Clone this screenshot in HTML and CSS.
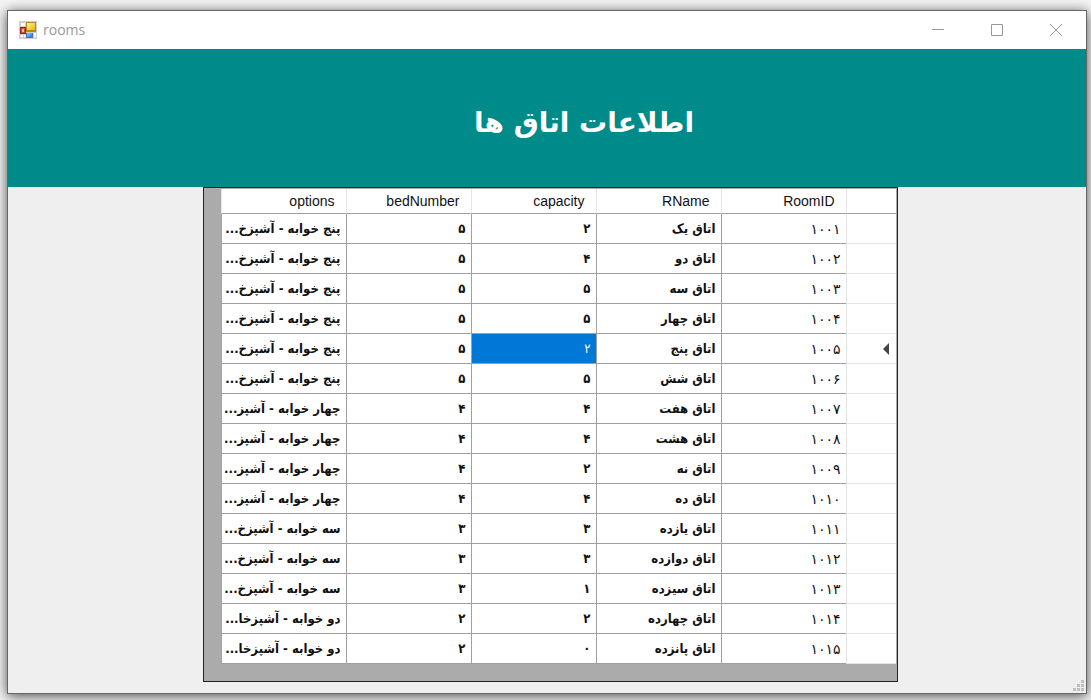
FILE: index.html
```html
<!DOCTYPE html>
<html lang="fa">
<head>
<meta charset="utf-8">
<title>rooms</title>
<link rel="stylesheet" href="styles.css">
</head>
<body>
<main class="window">
  <header class="titlebar">
    <svg class="app-icon" width="18" height="18" viewBox="0 0 18 18" aria-hidden="true">
      <defs>
        <linearGradient id="gold" x1="0" y1="0" x2="1" y2="1"><stop offset="0" stop-color="#fff3a0"/><stop offset="1" stop-color="#f0b400"/></linearGradient>
        <linearGradient id="blue" x1="0" y1="0" x2="1" y2="1"><stop offset="0" stop-color="#9cc4ff"/><stop offset="1" stop-color="#3a6fd8"/></linearGradient>
      </defs>
      <rect width="18" height="18" fill="#d0d0d0"/>
      <path d="M2 2h4v3H2zM2 14h2v2H2zM5 14h2v2H5zM15 12h2v4h-2z" fill="#fff"/>
      <rect x="1" y="6" width="6" height="7" fill="#a52020"/>
      <rect x="2" y="7" width="4" height="5" fill="#c84a40"/>
      <rect x="3" y="8" width="2" height="3" fill="#f4b8a8"/>
      <rect x="7" y="1" width="10" height="10" fill="#b98a10"/>
      <rect x="8" y="2" width="8" height="7" fill="url(#gold)"/>
      <rect x="7" y="12" width="7" height="5" fill="#3f6fd0"/>
      <rect x="8" y="12" width="5" height="4" fill="url(#blue)"/>
    </svg>
    <span class="caption">rooms</span>
    <div class="controls">
      <button type="button" class="control" aria-label="Minimize"><svg width="12" height="12" viewBox="0 0 12 12"><path d="M0 5.500h12"/></svg></button>
      <button type="button" class="control" aria-label="Maximize"><svg width="12" height="12" viewBox="0 0 12 12"><path d="M.5.5h11v11H.5z"/></svg></button>
      <button type="button" class="control" aria-label="Close"><svg width="12" height="12" viewBox="0 0 12 12"><path d="M0 0l12 12M12 0L0 12"/></svg></button>
    </div>
  </header>
  <div class="banner"><h1 class="heading" dir="rtl">اطلاعات اتاق ها</h1></div>
  <section class="content">
    <div class="grid">
      <table class="rooms" dir="rtl">
        <thead><tr><th class="marker"></th><th>RoomID</th><th>RName</th><th>capacity</th><th>bedNumber</th><th>options</th></tr></thead>
        <tbody>
          <tr><td class="marker"></td><td class="id">۱۰۰۱</td><td>اتاق یک</td><td>۲</td><td>۵</td><td>پنج خوابه - آشپزخ...</td></tr>
          <tr><td class="marker"></td><td class="id">۱۰۰۲</td><td>اتاق دو</td><td>۴</td><td>۵</td><td>پنج خوابه - آشپزخ...</td></tr>
          <tr><td class="marker"></td><td class="id">۱۰۰۳</td><td>اتاق سه</td><td>۵</td><td>۵</td><td>پنج خوابه - آشپزخ...</td></tr>
          <tr><td class="marker"></td><td class="id">۱۰۰۴</td><td>اتاق چهار</td><td>۵</td><td>۵</td><td>پنج خوابه - آشپزخ...</td></tr>
          <tr><td class="marker"><svg class="arrow" width="6" height="12" viewBox="0 0 6 12"><path d="M6 0v12L0 6z"/></svg></td><td class="id">۱۰۰۵</td><td>اتاق پنج</td><td class="selected">۲</td><td>۵</td><td>پنج خوابه - آشپزخ...</td></tr>
          <tr><td class="marker"></td><td class="id">۱۰۰۶</td><td>اتاق شش</td><td>۵</td><td>۵</td><td>پنج خوابه - آشپزخ...</td></tr>
          <tr><td class="marker"></td><td class="id">۱۰۰۷</td><td>اتاق هفت</td><td>۴</td><td>۴</td><td>چهار خوابه - آشپز...</td></tr>
          <tr><td class="marker"></td><td class="id">۱۰۰۸</td><td>اتاق هشت</td><td>۴</td><td>۴</td><td>چهار خوابه - آشپز...</td></tr>
          <tr><td class="marker"></td><td class="id">۱۰۰۹</td><td>اتاق نه</td><td>۲</td><td>۴</td><td>چهار خوابه - آشپز...</td></tr>
          <tr><td class="marker"></td><td class="id">۱۰۱۰</td><td>اتاق ده</td><td>۴</td><td>۴</td><td>چهار خوابه - آشپز...</td></tr>
          <tr><td class="marker"></td><td class="id">۱۰۱۱</td><td>اتاق یازده</td><td>۳</td><td>۳</td><td>سه خوابه - آشپزخ...</td></tr>
          <tr><td class="marker"></td><td class="id">۱۰۱۲</td><td>اتاق دوازده</td><td>۳</td><td>۳</td><td>سه خوابه - آشپزخ...</td></tr>
          <tr><td class="marker"></td><td class="id">۱۰۱۳</td><td>اتاق سیزده</td><td>۱</td><td>۳</td><td>سه خوابه - آشپزخ...</td></tr>
          <tr><td class="marker"></td><td class="id">۱۰۱۴</td><td>اتاق چهارده</td><td>۲</td><td>۲</td><td>دو خوابه - آشپزخا...</td></tr>
          <tr><td class="marker"></td><td class="id">۱۰۱۵</td><td>اتاق پانزده</td><td>۰</td><td>۲</td><td>دو خوابه - آشپزخا...</td></tr>
        </tbody>
      </table>
    </div>
  </section>
  <svg class="grip" width="11" height="11" viewBox="0 0 11 11" aria-hidden="true"><path d="M8 0h3v3H8zM4 4h3v3H4zM8 4h3v3H8zM0 8h3v3H0zM4 8h3v3H4zM8 8h3v3H8z"/></svg>
</main>
</body>
</html>
```
FILE: styles.css
```css
* { box-sizing: border-box; }

body {
  margin: 0;
  padding: 10px 4px 6px 7px;
  min-height: 100vh;
  display: flex;
  background: #f4f4f4;
  overflow: hidden;
  font-family: "Liberation Sans", "DejaVu Sans", sans-serif;
}

.window {
  position: relative;
  flex: 1;
  display: flex;
  flex-direction: column;
  border: 1px solid #666;
  background: #efefef;
  box-shadow: 0 2px 12px rgba(0, 0, 0, 0.7);
}

.titlebar {
  display: flex;
  align-items: center;
  height: 38px;
  padding: 0 1px 0 11px;
  gap: 6px;
  background: #fff;
}

.caption {
  color: #999;
  font: 14px/20px "Open Sans", sans-serif;
}

.controls {
  display: flex;
  align-self: stretch;
  margin-left: auto;
}

.control {
  width: 59px;
  padding: 0;
  border: 0;
  background: none;
  display: flex;
  align-items: center;
  justify-content: center;
}

.control path {
  fill: none;
  stroke: #999;
}

.banner {
  height: 138px;
  padding: 0 0 0 74px;
  display: flex;
  align-items: center;
  justify-content: center;
  background: #008b8b;
}

.heading {
  margin: 0;
  padding-top: 10px;
  color: #fff;
  font: bold 28px/40px "DejaVu Sans", sans-serif;
}

.content {
  display: flex;
  justify-content: center;
  padding-left: 6px;
}

.grid {
  width: 695px;
  max-width: 100%;
  padding: 1px 1px 17px 17px;
  border: 1px solid #222;
  background: #ababab;
}

.rooms {
  width: 100%;
  table-layout: fixed;
  border-collapse: separate;
  border-spacing: 0;
  background: #fff;
}

.rooms th,
.rooms td {
  padding: 0 5px;
  overflow: hidden;
  white-space: nowrap;
  text-align: right;
  border-bottom: 1px solid #a0a0a0;
  border-left: 1px solid #a0a0a0;
}

.rooms th {
  height: 25px;
  padding-right: 11px;
  border-left-color: #e5e5e5;
  color: #111;
  font: 14px/20px "Liberation Sans", sans-serif;
}

.rooms td {
  height: 30px;
  color: #111;
  font: bold 13px/20px "DejaVu Sans Condensed", "DejaVu Sans", sans-serif;
}

.rooms .id {
  font: 14px/20px "DejaVu Sans", sans-serif;
}

.rooms .marker {
  width: 50px;
  padding-right: 7px;
  border-left-color: #e5e5e5;
}

.rooms td.marker {
  border-bottom-color: #e5e5e5;
}

.rooms td.selected {
  background: #0078d7;
  color: #fff;
  font-weight: normal;
}

.arrow {
  display: block;
  fill: #444;
}

.grip {
  position: absolute;
  right: 2px;
  bottom: 2px;
  fill: #bfbfbf;
}
```
